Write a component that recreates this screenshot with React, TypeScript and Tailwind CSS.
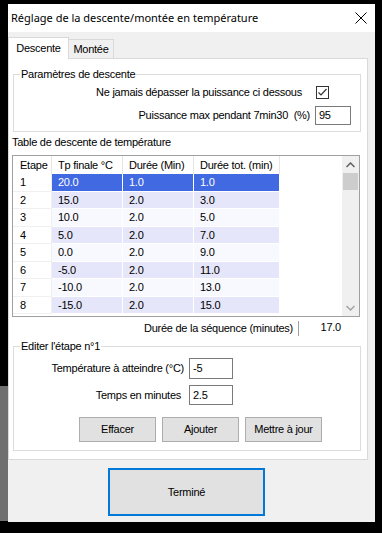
import React from "react";

const rows = [
  ["1", "20.0", "1.0", "1.0"],
  ["2", "15.0", "2.0", "3.0"],
  ["3", "10.0", "2.0", "5.0"],
  ["4", "5.0", "2.0", "7.0"],
  ["5", "0.0", "2.0", "9.0"],
  ["6", "-5.0", "2.0", "11.0"],
  ["7", "-10.0", "2.0", "13.0"],
  ["8", "-15.0", "2.0", "15.0"],
];

function Row({ r, i }: { r: string[]; i: number }) {
  const sel = i === 0;
  const bg = sel ? "bg-[#4169e1] text-white" : i % 2 === 1 ? "bg-[#e6e6fa]" : "bg-[#f8f8ff]";
  return (
    <div className="flex h-[17.5px] leading-[17px]">
      <div className="w-[39px] bg-white pl-[7px] border-r border-b border-[#f0f0f0]">{r[0]}</div>
      <div className={`w-[71px] pl-[6px] border-r border-b border-white ${bg}`}>{r[1]}</div>
      <div className={`w-[71px] pl-[6px] border-r border-b border-white ${bg}`}>{r[2]}</div>
      <div className={`w-[86px] pl-[6px] border-r border-b border-white ${bg}`}>{r[3]}</div>
    </div>
  );
}

export default function App() {
  return (
    <div
      className="w-[382px] h-[533px] bg-black flex text-[11px] tracking-[-0.25px] text-black overflow-hidden"
      style={{ fontFamily: '"Liberation Sans", Arial, sans-serif' }}
    >
      <div className="w-[8px] flex flex-col">
        <div className="flex-1 bg-black" />
        <div className="h-[135px] bg-[#6f6f6f]" />
        <div className="h-[12px] bg-black" />
      </div>
      <div className="w-[367px] h-[518px] mt-[4px] bg-[#f0f0f0] flex flex-col">
        {/* title bar */}
        <div className="h-[28px] bg-white flex items-center justify-between pl-[3px] pr-[8px]">
          <span
            className="text-[11px] tracking-normal text-[#000]"
            style={{ fontFamily: '"Noto Sans", "Open Sans", sans-serif' }}
          >
            Réglage de la descente/montée en température
          </span>
          <svg width="12" height="12" viewBox="0 0 12 12">
            <path d="M0.5 0.5 L11.5 11.5 M11.5 0.5 L0.5 11.5" stroke="#000" strokeWidth="1" />
          </svg>
        </div>
        {/* tabs */}
        <div className="flex items-end h-[24px] mt-[2px] relative z-10">
          <div className="w-[61px] h-[22px] bg-white border-t border-l border-r border-[#d9d9d9] flex items-center justify-center -mb-[1px]">
            Descente
          </div>
          <div className="w-[45px] h-[19px] bg-[#f0f0f0] border-t border-r border-[#d9d9d9] flex items-center justify-center">
            Montée
          </div>
        </div>
        {/* panel */}
        <div className="w-[360px] h-[402px] bg-white border border-[#d9d9d9] flex flex-col pl-[3px] pr-[6px]">
          <fieldset className="mt-[8px] ml-[1px] border border-[#dcdcdc] h-[65px] px-0">
            <legend className="ml-[6px] px-[1px] leading-[14px]">Paramètres de descente</legend>
            <div className="flex justify-end items-center pr-[31px] mt-[4px] h-[14px]">
              <span className="mr-[14px]">Ne jamais dépasser la puissance ci dessous</span>
              <div className="w-[13px] h-[13px] border border-[#333] bg-white flex items-center justify-center">
                <svg width="11" height="11" viewBox="0 0 11 11">
                  <path d="M1.5 5.5 L4 8 L9.5 2" stroke="#333" strokeWidth="1.2" fill="none" />
                </svg>
              </div>
            </div>
            <div className="flex justify-end items-center pr-[9px] mt-[7px]">
              <span className="mr-[5px]">Puissance max pendant 7min30&nbsp; (%)</span>
              <div className="w-[36px] h-[19px] border border-[#7a7a7a] bg-white pl-[3px] leading-[17px]">95</div>
            </div>
          </fieldset>
          <div className="mt-[3px] leading-[14px]">Table de descente de température</div>
          {/* table */}
          <div className="mt-[6px] w-[348px] h-[162px] border border-[#a0a0a0] bg-white flex">
            <div className="flex-1 flex flex-col">
              <div className="flex h-[18px] leading-[18px]">
                <div className="w-[39px] pl-[7px] border-r border-[#e5e5e5]">Etape</div>
                <div className="w-[71px] pl-[6px] border-r border-[#e5e5e5]">Tp finale °C</div>
                <div className="w-[71px] pl-[6px] border-r border-[#e5e5e5]">Durée (Min)</div>
                <div className="w-[86px] pl-[6px] border-r border-[#e5e5e5] whitespace-nowrap">Durée tot. (min)</div>
              </div>
              {rows.map((r, i) => (
                <Row key={i} r={r} i={i} />
              ))}
            </div>
            <div className="w-[17px] bg-[#f0f0f0] flex flex-col items-center">
              <div className="h-[17px] flex items-center justify-center">
                <svg width="9" height="6" viewBox="0 0 9 6">
                  <path d="M0.5 5 L4.5 1 L8.5 5" stroke="#606060" strokeWidth="1.5" fill="none" />
                </svg>
              </div>
              <div className="w-[15px] h-[17px] bg-[#cdcdcd]" />
              <div className="flex-1" />
              <div className="h-[17px] flex items-center justify-center">
                <svg width="9" height="6" viewBox="0 0 9 6">
                  <path d="M0.5 1 L4.5 5 L8.5 1" stroke="#a3a3a3" strokeWidth="1.5" fill="none" />
                </svg>
              </div>
            </div>
          </div>
          <div className="flex items-center justify-end h-[17px] mt-[3px] pr-[19px]">
            <span>Durée de la séquence (minutes)</span>
            <div className="ml-[5px] h-[15px] border-l border-[#a0a0a0] w-[44px] text-right pr-[1px] leading-[13px]">17.0</div>
          </div>
          <fieldset className="mt-[2px] ml-[1px] border border-[#dcdcdc] h-[112px] px-0">
            <legend className="ml-[6px] px-[1px] leading-[14px]">Editer l'étape n°1</legend>
            <div className="flex items-center mt-[5px]">
              <span className="w-[170px] text-right">Température à atteindre (°C)</span>
              <div className="ml-[5px] w-[44px] h-[21px] border border-[#7a7a7a] bg-white pl-[3px] leading-[19px]">-5</div>
            </div>
            <div className="flex items-center mt-[6px]">
              <span className="w-[167px] text-right">Temps en minutes</span>
              <div className="ml-[8px] w-[44px] h-[20px] border border-[#7a7a7a] bg-white pl-[3px] leading-[18px]">2.5</div>
            </div>
            <div className="flex mt-[12px] ml-[65px] gap-[6px]">
              <div className="w-[77px] h-[25px] bg-[#e1e1e1] border border-[#adadad] flex items-center justify-center">Effacer</div>
              <div className="w-[77px] h-[25px] bg-[#e1e1e1] border border-[#adadad] flex items-center justify-center">Ajouter</div>
              <div className="w-[77px] h-[25px] bg-[#e1e1e1] border border-[#adadad] flex items-center justify-center">Mettre à jour</div>
            </div>
          </fieldset>
        </div>
        <div className="flex mt-[8px] ml-[100px]">
          <div className="w-[157px] h-[48px] bg-[#e1e1e1] border-2 border-[#0078d7] flex items-center justify-center">
            Terminé
          </div>
        </div>
      </div>
    </div>
  );
}
